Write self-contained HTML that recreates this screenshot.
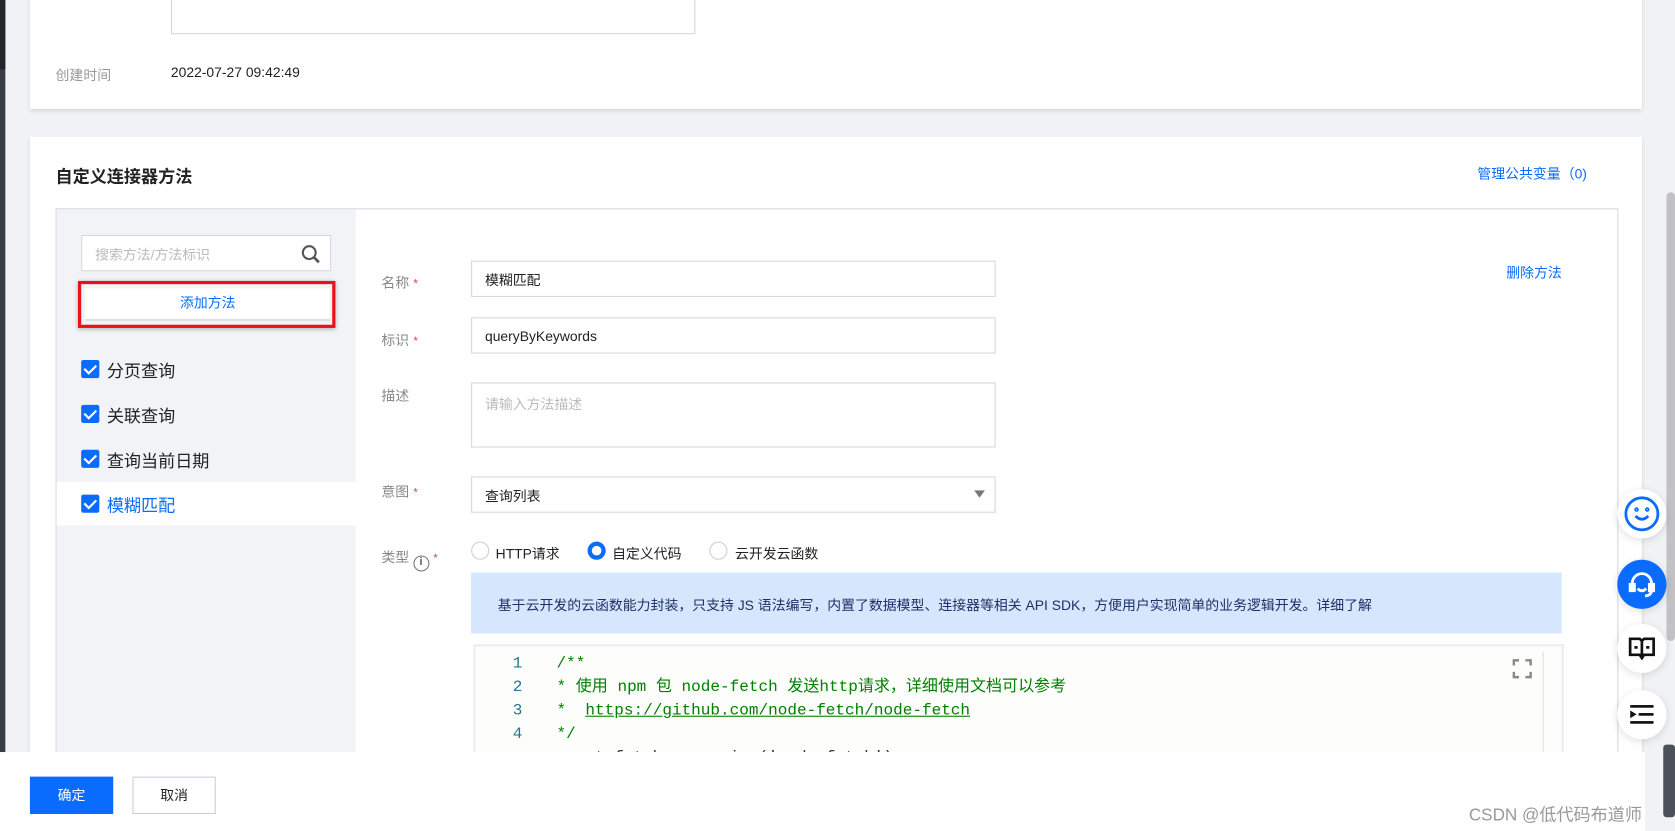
<!DOCTYPE html>
<html><head><meta charset="utf-8"><style>
*{box-sizing:border-box;margin:0;padding:0}
html,body{width:1675px;height:831px;overflow:hidden;background:#f1f2f5}
#w{position:absolute;left:0;top:0;width:1568px;height:778px;transform:scale(1.06824);transform-origin:0 0;font-family:"Liberation Sans","Noto Sans CJK SC",sans-serif;font-size:13px;color:#222;background:#f1f2f5}
.a{position:absolute}
.card{background:#fff;box-shadow:0 2px 4px rgba(0,0,0,.12)}
.inp{position:absolute;border:1px solid #d3d7e0;background:#fff;padding:0 12px;display:flex;align-items:center;font-size:13px}
.lbl{position:absolute;left:357px;color:#888;font-size:13px}
.lbl i{color:#e54545;font-style:normal;margin-left:4px;font-size:11px}
.cb{position:absolute;left:76px;width:17px;height:17px;background:#0a6cff;border-radius:2px}
.cb:after{content:"";position:absolute;left:5px;top:2px;width:5px;height:9px;border:solid #fff;border-width:0 2px 2px 0;transform:rotate(45deg)}
.it{position:absolute;left:100px;font-size:16px;color:#222}
.rad{position:absolute;width:17px;height:17px;border-radius:50%;border:1px solid #ccd;background:#fff}
.code{font-family:"Liberation Mono","Noto Sans CJK SC",monospace;font-size:15px;position:absolute}
.fab{position:absolute;left:1514px;width:46px;height:46px;border-radius:50%;background:#fff;box-shadow:0 2px 8px rgba(0,0,0,.12);display:flex;align-items:center;justify-content:center}
</style></head><body><div id="w">
<div class="a" style="left:0;top:0;width:5px;height:778px;background:#3a3e46"></div>
<div class="a" style="left:0;top:0;width:5px;height:65px;background:#23262c"></div>
<div class="a card" style="left:28px;top:-5px;width:1509px;height:107px"></div>
<div class="a" style="left:160px;top:-2px;width:491px;height:34px;border:1px solid #d3d7e0"></div>
<div class="a" style="left:52px;top:60px;color:#999">创建时间</div>
<div class="a" style="left:160px;top:60px;color:#222">2022-07-27 09:42:49</div>

<div class="a card" style="left:28px;top:128px;width:1509px;height:640px"></div>
<div class="a" style="left:52px;top:152px;font-size:16px;font-weight:bold">自定义连接器方法</div>
<div class="a" style="left:1383px;top:152px;color:#0a6cff">管理公共变量（0)</div>
<div class="a" style="left:52px;top:195px;width:1463px;height:520px;border:1px solid #d3d7e0"></div>
<div class="a" style="left:53px;top:196px;width:280px;height:508px;background:#f2f3f7"></div>
<div class="inp" style="left:76px;top:220px;width:234px;height:34px;color:#bbb">搜索方法/方法标识</div>
<svg class="a" style="left:282px;top:229px" width="18" height="18" viewBox="0 0 18 18"><circle cx="7.5" cy="7.5" r="6" fill="none" stroke="#555" stroke-width="2"/><path d="M12 12l4.5 4.5" stroke="#555" stroke-width="2.5"/></svg>
<div class="a" style="left:73px;top:263px;width:241px;height:44px;border:3px solid #e8131a;box-shadow:0 1px 4px rgba(0,0,0,.3)"></div>
<div class="a" style="left:80px;top:270px;width:229px;height:30px;background:#fff;color:#0a6cff;text-align:center;line-height:28px;border-bottom:1px solid #ccc">添加方法</div>
<div class="cb" style="top:337px"></div><div class="it" style="top:334px">分页查询</div>
<div class="cb" style="top:379px"></div><div class="it" style="top:376px">关联查询</div>
<div class="cb" style="top:421px"></div><div class="it" style="top:418px">查询当前日期</div>
<div class="a" style="left:53px;top:451px;width:280px;height:41px;background:#fff"></div>
<div class="cb" style="top:463px"></div><div class="it" style="top:460px;color:#0a6cff">模糊匹配</div>

<div class="lbl" style="top:254px">名称<i>*</i></div>
<div class="inp" style="left:441px;top:244px;width:491px;height:34px">模糊匹配</div>
<div class="lbl" style="top:308px">标识<i>*</i></div>
<div class="inp" style="left:441px;top:297px;width:491px;height:34px">queryByKeywords</div>
<div class="lbl" style="top:360px">描述</div>
<div class="inp" style="left:441px;top:358px;width:491px;height:61px;align-items:flex-start;padding-top:9px;color:#bbb">请输入方法描述</div>
<div class="lbl" style="top:450px">意图<i>*</i></div>
<div class="inp" style="left:441px;top:446px;width:491px;height:34px">查询列表</div>
<div class="a" style="left:912px;top:459px;border:5px solid transparent;border-top:7px solid #777"></div>
<div class="a" style="left:1410px;top:245px;color:#0a6cff">删除方法</div>
<div class="lbl" style="top:511px">类型 <span style="display:inline-block;width:15px;height:15px;border:1.5px solid #777;border-radius:50%;text-align:center;font-size:10px;line-height:12px;color:#555;font-weight:bold;vertical-align:-3px">i</span><i>*</i></div>
<div class="rad" style="left:441px;top:507px"></div><div class="a" style="left:464px;top:508px">HTTP请求</div>
<div class="rad" style="left:550px;top:507px;border:4px solid #0a6cff"></div><div class="a" style="left:573px;top:508px">自定义代码</div>
<div class="rad" style="left:664px;top:507px"></div><div class="a" style="left:688px;top:508px">云开发云函数</div>
<div class="a" style="left:441px;top:536px;width:1021px;height:57px;background:#d5e6fd;color:#1d3166;padding:20px 0 0 25px">基于云开发的云函数能力封装，只支持 JS 语法编写，内置了数据模型、连接器等相关 API SDK，方便用户实现简单的业务逻辑开发。详细了解</div>
<div class="a" style="left:443px;top:603px;width:1021px;height:101px;border:2px solid #eee;border-bottom:0;background:#fdfdfb"></div>
<div class="a" style="left:1444px;top:610px;width:1px;height:94px;background:#ddd"></div>
<div class="code" style="left:480px;top:611px;color:#237893;line-height:22px">1<br>2<br>3<br>4</div>
<div class="code" style="left:521px;top:611px;color:#008000;line-height:22px;white-space:pre">/**
* 使用 npm 包 node-fetch 发送http请求，详细使用文档可以参考
*  <u>https://github.com/node-fetch/node-fetch</u>
*/
<span style="color:#333">const fetch = require('node-fetch');</span></div>

<div class="a" style="left:0;top:704px;width:1540px;height:74px;background:#fff"></div>
<svg class="a" style="left:1416px;top:617px" width="18" height="18" viewBox="0 0 18 18" fill="none" stroke="#888" stroke-width="2.5"><path d="M1 6V1h5M12 1h5v5M17 12v5h-5M6 17H1v-5"/></svg>
<div class="a" style="left:28px;top:727px;width:78px;height:35px;background:#0a6cff;color:#fff;text-align:center;line-height:35px">确定</div>
<div class="a" style="left:124px;top:727px;width:78px;height:35px;border:1px solid #ccd;text-align:center;line-height:33px;background:#fff">取消</div>

<div class="a" style="left:1540px;top:0;width:28px;height:704px;background:#f1f2f5"></div>
<div class="a" style="left:1560px;top:180px;width:8px;height:420px;background:#c2c2c4;border-radius:4px"></div>
<div class="a" style="left:1557px;top:697px;width:11px;height:68px;background:#4b505a;border-radius:3px"></div>
<div class="fab" style="top:458px"><svg width="36" height="36" viewBox="0 0 36 36" fill="none" stroke="#0a6cff" stroke-width="2.6"><circle cx="18" cy="18" r="15"/><path d="M12 20q6 6 12 0"/><circle cx="13" cy="14" r=".8"/><circle cx="23" cy="14" r=".8"/></svg></div>
<div class="fab" style="top:524px;background:#0a6cff"><svg width="28" height="28" viewBox="0 0 28 28" fill="none" stroke="#fff" stroke-width="2.6"><path d="M5 16v-3a9 9 0 0118 0v3"/><rect x="3" y="14" width="4" height="6" fill="#fff"/><rect x="21" y="14" width="4" height="6" fill="#fff"/><path d="M10 18q4 4 8 0M23 20q0 4-6 5"/></svg></div>
<div class="fab" style="top:584px"><svg width="26" height="22" viewBox="0 0 26 22" fill="none" stroke="#111" stroke-width="2.5"><path d="M2 2h9l2 2 2-2h9v15h-9l-2 3-2-3H2z M13 4v14"/><path d="M6 10h3M17 10h3"/></svg></div>
<div class="fab" style="top:646px"><svg width="22" height="18" viewBox="0 0 22 18" fill="#111"><rect x="0" y="0" width="22" height="2.5"/><rect x="8" y="7.5" width="14" height="2.5"/><rect x="0" y="15" width="22" height="2.5"/><path d="M0 5l6 3.7-6 3.7z"/></svg></div>
<div class="a" style="left:1375px;top:749px;font-size:16px;color:#999">CSDN @低代码布道师</div>
</div></body></html>
